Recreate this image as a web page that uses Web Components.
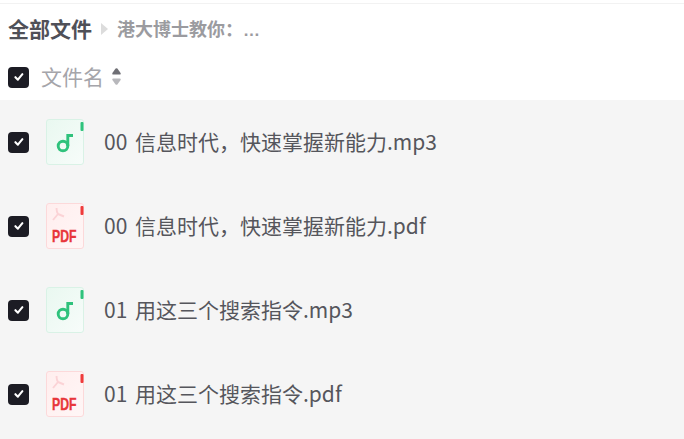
<!DOCTYPE html>
<html>
<head>
<meta charset="utf-8">
<style>
  html, body { margin: 0; height: 100%; overflow: hidden; background: #fff; }
  body { font-family: "Noto Sans CJK SC", "Liberation Sans", sans-serif; }
</style>
</head>
<body>
<file-page>
  <file-crumbs slot="crumbs" current="港大博士教你：">全部文件</file-crumbs>
  <file-head slot="head">文件名</file-head>
  <file-row type="mp3">00 信息时代，快速掌握新能力.mp3</file-row>
  <file-row type="pdf">00 信息时代，快速掌握新能力.pdf</file-row>
  <file-row type="mp3">01 用这三个搜索指令.mp3</file-row>
  <file-row type="pdf">01 用这三个搜索指令.pdf</file-row>
</file-page>

<script>
'use strict';

const CHECK = `
  <span class="check">
    <svg width="12" height="12" viewBox="0 0 12 12">
      <path d="M2.4 6.2 L4.9 8.7 L9.4 3.2" fill="none" stroke="#fff" stroke-width="2.1" stroke-linecap="round" stroke-linejoin="round"/>
    </svg>
  </span>`;

const CHECK_CSS = `
  .check {
    flex: none;
    width: 21px;
    height: 21px;
    border-radius: 4px;
    background: #1c1c24;
    display: flex;
    align-items: center;
    justify-content: center;
  }`;

class FilePage extends HTMLElement {
  constructor() {
    super();
    this.attachShadow({ mode: 'open' }).innerHTML = `
      <style>
        :host { display: flex; flex-direction: column; height: 439px; }
        .top { height: 3px; border-bottom: 1px solid #f2f2f2; flex: none; }
        .list { background: #f5f5f5; flex: 1; }
      </style>
      <div class="top"></div>
      <slot name="crumbs"></slot>
      <slot name="head"></slot>
      <div class="list"><slot></slot></div>
    `;
  }
}

class FileCrumbs extends HTMLElement {
  constructor() {
    super();
    this.attachShadow({ mode: 'open' }).innerHTML = `
      <style>
        :host { display: flex; align-items: center; height: 50px; padding-left: 8px; font-weight: 700; }
        .root { font-size: 21px; color: #4f5058; padding-bottom: 2px; }
        .arrow { width: 0; height: 0; margin: 0 9px; border-left: 7px solid #dcdcdc; border-top: 6px solid transparent; border-bottom: 6px solid transparent; }
        .cur { font-size: 18px; color: #9b9b9f; padding-bottom: 2px; }
        .dots { font-family: "Liberation Sans", sans-serif; font-size: 17px; }
      </style>
      <span class="root"><slot></slot></span>
      <span class="arrow"></span>
      <span class="cur">${this.getAttribute('current')}<span class="dots">…</span></span>
    `;
  }
}

class FileHead extends HTMLElement {
  constructor() {
    super();
    this.attachShadow({ mode: 'open' }).innerHTML = `
      <style>
        :host { display: flex; align-items: center; height: 46px; padding-left: 8px; font-size: 21px; color: #a5a5aa; }
        ${CHECK_CSS}
        .name { margin-left: 12px; padding-bottom: 2px; }
        .sort { margin-left: 8px; padding-bottom: 2px; display: flex; flex-direction: column; gap: 3px; }
        svg { display: block; }
      </style>
      ${CHECK}
      <span class="name"><slot></slot></span>
      <span class="sort">
        <svg width="9" height="7" viewBox="0 0 9 7"><path d="M3.6 .6 Q4.5 -.1 5.4 .6 L8.6 5 Q9 6.5 7.8 6.5 H1.2 Q0 6.5 .4 5 Z" fill="#6f6f75"/></svg>
        <svg width="9" height="7" viewBox="0 0 9 7"><path d="M3.6 6.4 Q4.5 7.1 5.4 6.4 L8.6 2 Q9 .5 7.8 .5 H1.2 Q0 .5 .4 2 Z" fill="#b8b8bc"/></svg>
      </span>
    `;
  }
}

const ICONS = {
  mp3: `
    <svg width="38" height="46" viewBox="0 0 38 46">
      <defs><linearGradient id="g" x1="0" y1="0" x2="1" y2="1"><stop offset="0" stop-color="#e9f8f0"/><stop offset="1" stop-color="#f7fcfa"/></linearGradient></defs>
      <path d="M3 .5 H35 Q37.5 .5 37.5 3 V43 Q37.5 45.5 35 45.5 H3 Q.5 45.5 .5 43 V3 Q.5 .5 3 .5 Z" fill="url(#g)" stroke="#d9f2e6"/>
      <rect x="34.5" y="3" width="3" height="9" rx="1" fill="#2fc27c"/>
      <path d="M27 16.5 H21.8 V27" fill="none" stroke="#2fc27c" stroke-width="2.9"/>
      <circle cx="17" cy="27" r="4.8" fill="none" stroke="#2fc27c" stroke-width="2.9"/>
    </svg>`,
  pdf: `
    <svg width="38" height="46" viewBox="0 0 38 46">
      <defs><linearGradient id="g" x1="0" y1="0" x2="1" y2="1"><stop offset="0" stop-color="#ffeeee"/><stop offset="1" stop-color="#fff6f6"/></linearGradient></defs>
      <path d="M3 .5 H35 Q37.5 .5 37.5 3 V43 Q37.5 45.5 35 45.5 H3 Q.5 45.5 .5 43 V3 Q.5 .5 3 .5 Z" fill="url(#g)" stroke="#fcd9da"/>
      <rect x="34.5" y="3" width="3" height="9" rx="1" fill="#ee3b3b"/>
      <path d="M10.5 5 Q10.5 9 12 11 M12 11 L7 17 M12 11 L18 13.5" fill="none" stroke="#fbd3d6" stroke-width="1.9"/>
    </svg>`
};

class FileRow extends HTMLElement {
  constructor() {
    super();
    const type = this.getAttribute('type');
    const label = type === 'pdf' ? '<span class="tag">PDF</span>' : '';
    this.attachShadow({ mode: 'open' }).innerHTML = `
      <style>
        :host { display: flex; align-items: center; height: 84px; padding-left: 8px; font-size: 21px; color: #55565c; }
        ${CHECK_CSS}
        .icon { flex: none; position: relative; width: 38px; height: 46px; margin-left: 17px; }
        svg { display: block; }
        /* PDF の文字はアイコンに重ねる */
        .tag {
          position: absolute;
          left: 6px;
          top: 25px;
          font: 700 17px/18px "Liberation Sans", sans-serif;
          -webkit-text-stroke: .4px #e8363b;
          color: #e8363b;
          white-space: nowrap;
          transform: scaleX(.72);
          transform-origin: 0 0;
        }
        .name { margin-left: 20px; padding-bottom: 2px; white-space: nowrap; word-spacing: 3px; }
      </style>
      ${CHECK}
      <span class="icon">${ICONS[type]}${label}</span>
      <span class="name"><slot></slot></span>
    `;
  }
}

customElements.define('file-page', FilePage);
customElements.define('file-crumbs', FileCrumbs);
customElements.define('file-head', FileHead);
customElements.define('file-row', FileRow);
</script>
</body>
</html>
